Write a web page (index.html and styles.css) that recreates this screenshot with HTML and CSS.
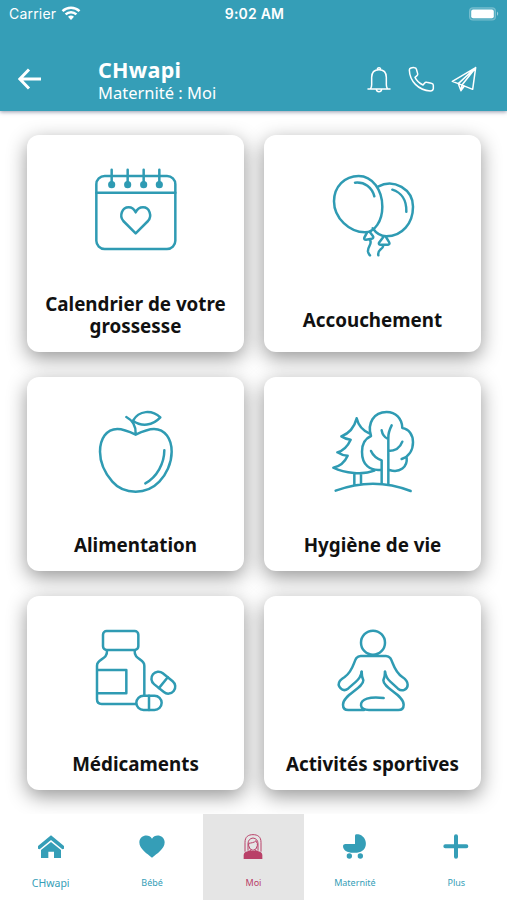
FILE: index.html
```html
<!DOCTYPE html>
<html lang="fr">

<head>
    <meta charset="UTF-8">
    <meta name="viewport" content="width=device-width, initial-scale=1.0">
    <title>CHwapi - Maternité</title>
    <link rel="stylesheet" href="styles.css">
</head>

<body>
    <header class="header">
        <!-- Status bar -->
        <div class="status">
            <div class="carrier">
                <span>Carrier</span>
                <svg width="20" height="15" viewBox="0 0 20 15" fill="none" stroke="#fff" stroke-width="2.5">
                    <path d="M1.5 5.1C6.4.6 13.6.6 18.5 5.1M4.6 8.3C7.7 5.4 12.3 5.4 15.4 8.3" />
                    <path d="M7 10.8Q10 8.3 13 10.8L10 13.9Z" fill="#fff" stroke="none" />
                </svg>
            </div>
            <span class="time">9:02 AM</span>
            <svg class="battery" width="32" height="16" viewBox="0 0 32 16">
                <rect x="1" y="1.2" width="27" height="13.4" rx="4" fill="#76bdce" />
                <rect x="2.2" y="2.4" width="24.6" height="11" rx="3" fill="#4fabc1" />
                <rect x="3.2" y="3.6" width="22.6" height="8.6" rx="2" fill="#fff" />
                <path d="M29 5.6Q31.4 7.8 29 10Z" fill="#9bcfdb" />
            </svg>
        </div>
        <!-- Title bar -->
        <div class="toolbar">
            <svg class="back" width="24" height="22" viewBox="0 0 24 22" fill="none" stroke="#fff" stroke-width="3">
                <path d="M11 1.500 1.800 11 11 20.500M2 11H23" />
            </svg>
            <div class="heading">
                <h1>CHwapi</h1>
                <p>Maternité : Moi</p>
            </div>
            <div class="actions">
                <svg width="26" height="28" viewBox="0 0 78 84">
                    <path d="M6 72H72M13 72Q17 67 17 59V37C17 22 26 14 39 14S61 22 61 37V59Q61 67 65 72M31 73Q32 80 39 80T47 73M34 14Q34 8 39 8T44 14" />
                </svg>
                <svg width="28" height="28" viewBox="0 0 84 84">
                    <path d="M7 15C7 9 14 7 23 8Q27 8 28 12L32 26Q33 30 30 32L24 37C29 47 38 55 48 60L53 54Q55 51 59 52L73 55Q79 56 79 61V71Q78 78 70 78C34 76 8 48 7 15Z" />
                </svg>
                <svg width="28" height="28" viewBox="0 0 84 84">
                    <path d="M77 8 7 49 25 56 68 73ZM77 8 25 56 33 77 43 63M33 77 36 60 77 8" />
                </svg>
            </div>
        </div>
    </header>

    <main class="grid">
        <a class="card">
            <svg class="icon" viewBox="222 129 252 252">
                <rect x="229" y="153" width="237" height="219" rx="25" />
                <path d="M229 203H466M275 134V178M323 134V178M371 134V178M418 134V178M347 325 310 288C297 273 306 247 326 247Q340 247 347 262Q354 247 369 247C389 247 397 273 384 288Z" />
                <g class="dots">
                    <circle cx="275" cy="179" r="7" />
                    <circle cx="323" cy="179" r="7" />
                    <circle cx="371" cy="179" r="7" />
                    <circle cx="418" cy="179" r="7" />
                </g>
            </svg>
            <h2>Calendrier de votre grossesse</h2>
        </a>
        <a class="card">
            <svg class="icon" viewBox="219 144 252 252">
                <path d="M302 150C343 150 373 192 373 242C373 285 350 319 321 319C275 319 228 277 228 226C228 182 260 150 302 150ZM360 182C408 155 465 191 465 242C465 291 433 331 385 331Q361 331 344 307" />
                <path d="M291 170C320 167 342 184 349 211M403 191C429 199 446 222 445 257" />
                <path d="M327 320 319 335Q317 341 324 341L341 338Q349 336 344 329L336 319M376 333 363 350Q361 356 368 356H390Q397 355 393 348L384 333" />
                <path d="M336 342C344 354 328 361 330 377Q331 383 336 388M376 358Q375 366 367 371Q359 378 361 388" />
            </svg>
            <h2>Accouchement</h2>
        </a>
        <a class="card">
            <svg class="icon" viewBox="222 117 252 252">
                <path d="M347 191C316 176 305 174 292 174C259 174 240 204 240 242C240 277 259 311 277 332C295 353 321 362 347 362S398 353 418 332C438 311 455 277 455 242C455 204 435 174 402 174C389 174 374 178 347 191ZM347 189Q349 154 319 138M339 149C357 117 396 116 421 139C398 164 365 168 339 149M433 238C433 277 411 318 376 337" />
            </svg>
            <h2>Alimentation</h2>
        </a>
        <a class="card">
            <svg class="icon" viewBox="219 117 252 252">
                <path d="M334 187C312 178 300 159 296 142C289 169 274 187 250 196Q264 205 278 206C269 226 255 239 238 244Q253 254 269 254C260 274 244 286 226 290C260 307 316 312 349 299M289 307V340M309 307V340M233 359C306 332 386 332 458 360" />
                <path d="M371 296C335 301 312 281 312 242C312 221 321 203 339 195C327 157 347 123 386 123C413 123 432 142 433 171C453 174 465 191 465 214C465 237 453 257 431 264M446 260C449 288 426 307 394 297M371 338V268Q348 260 339 240M391 338V202Q390 184 401 163M371 178Q374 196 390 204M391 240Q423 240 433 212" />
            </svg>
            <h2>Hygiène de vie</h2>
        </a>
        <a class="card">
            <svg class="icon" viewBox="222 129 252 252">
                <rect x="249" y="135" width="106" height="57" rx="11" />
                <path d="M261 193C263 224 231 216 231 239V340Q231 354 245 354H348M344 193C342 224 373 216 373 239V328M231 252H319V322H231" />
                <rect x="349" y="329" width="76" height="43" rx="21.500" />
                <path d="M387 329V372" />
                <g transform="rotate(39 430 290)">
                    <rect x="390" y="269" width="80" height="42" rx="21" />
                    <path d="M430 269V311" />
                </g>
            </svg>
            <h2>Médicaments</h2>
        </a>
        <a class="card">
            <svg class="icon" viewBox="219 129 252 252">
                <circle cx="345" cy="170" r="36" />
                <path d="M311 257Q311 272 316 283C316 308 255 326 255 356Q255 372 271 372H318M381 257Q381 272 376 283C376 308 437 326 437 356Q437 372 421 372H333C302 372 302 347 327 338Q345 332 377 336" />
                <path d="M311 257Q308 275 294 287L270 308C253 321 235 299 246 284Q249 280 260 273C294 249 284 210 308 210H384C408 210 398 249 433 273C445 281 449 286 449 296C449 311 432 318 420 308L397 287Q384 276 381 257" />
            </svg>
            <h2>Activités sportives</h2>
        </a>
    </main>

    <!-- Bottom tabs -->
    <nav class="tabs">
        <a class="tab tab-large">
            <svg viewBox="0 0 84 84">
                <path d="M42 7 81 39V47L76 49 42 21 8 49 3 47V39ZM42 27 72 51V75H51V56H34V75H12V51Z" />
            </svg>
            <span>CHwapi</span>
        </a>
        <a class="tab">
            <svg viewBox="0 0 84 84">
                <path d="M42 74C28 63 4 48 4 28C4 6 33 0 42 17C51 0 80 6 80 28C80 48 56 63 42 74Z" />
            </svg>
            <span>Bébé</span>
        </a>
        <a class="tab active">
            <svg viewBox="0 0 84 84">
                <path d="M14 78V66Q15 57 26 55L35 51Q42 57 49 51L58 55Q69 57 70 66V78Z" />
                <path class="line" d="M18 56V28C18 11 28 5 42 5S66 11 66 28V56M27 53V31Q28 17 42 15Q56 17 57 31V53M29 31C35 30 47 29 51 23Q52 30 55 31V38Q53 51 42 52Q31 51 29 38Z" />
            </svg>
            <span>Moi</span>
        </a>
        <a class="tab">
            <svg viewBox="0 0 84 84">
                <path d="M46 4H52C82 10 84 57 48 59H37C18 59 6 52 6 38Q7 33 13 33H42V8Q43 4 46 4Z" />
                <circle cx="25" cy="69" r="8" />
                <circle cx="58" cy="69" r="8" />
            </svg>
            <span>Maternité</span>
        </a>
        <a class="tab">
            <svg viewBox="0 0 84 84">
                <path class="plus" d="M42 10V71M10 40H73" />
            </svg>
            <span>Plus</span>
        </a>
    </nav>
</body>

</html>
```
FILE: styles.css
```css
* {
    box-sizing: border-box;
}

body {
    margin: 0;
    height: 900px;
    display: flex;
    flex-direction: column;
    overflow: hidden;
    background: #fff;
    color: #111;
    font-family: "Noto Sans", sans-serif;
}

h1,
h2,
p {
    margin: 0;
}

.header {
    height: 111px;
    flex: none;
    background: #359eb7;
    color: #fff;
    box-shadow: 0 1px 4px rgba(40, 50, 90, 0.5);
    z-index: 1;
}

.status {
    display: grid;
    grid-template-columns: 1fr auto 1fr;
    align-items: center;
    height: 27px;
    padding: 0 7px 0 9px;
    font-family: Inter, sans-serif;
    font-size: 14px;
}

.carrier {
    display: flex;
    align-items: center;
    gap: 5px;
    letter-spacing: 0.2px;
}

.time {
    font-weight: 600;
    letter-spacing: 0.2px;
}

.battery {
    justify-self: end;
}

.toolbar {
    display: flex;
    align-items: center;
    height: 84px;
    padding: 0 29px 0 18px;
}

.back {
    margin-top: 19px;
}

.heading {
    margin: 24px 0 0 56px;
}

.heading h1 {
    font-size: 21.5px;
    line-height: 23px;
    letter-spacing: 0.3px;
}

.heading p {
    font-size: 16.5px;
    line-height: 23px;
}

.actions {
    display: flex;
    gap: 15px;
    margin: 19px 0 0 auto;
}

.actions svg {
    fill: none;
    stroke: #fff;
    stroke-width: 4.5;
    stroke-linejoin: round;
    stroke-linecap: round;
}

.grid {
    flex: 1;
    display: grid;
    grid-template-columns: 217px 217px;
    grid-template-rows: 217px 194px 194px;
    gap: 25px 20px;
    padding: 24px 27px 0;
}

.card {
    display: flex;
    flex-direction: column;
    align-items: center;
    justify-content: space-around;
    padding: 33px 12px 15px;
    background: #fff;
    border-radius: 12px;
    box-shadow: 0 6px 20px rgba(0, 0, 0, 0.42);
}

.icon {
    width: 84px;
    height: 84px;
    flex: none;
    fill: none;
    stroke: #2f9bb3;
    stroke-width: 7.5;
    stroke-linecap: round;
    stroke-linejoin: round;
}

.dots {
    fill: #2f9bb3;
}

.card h2 {
    padding-top: 40px;
    font-size: 18.8px;
    line-height: 22px;
    text-align: center;
}

.tabs {
    display: grid;
    grid-template-columns: repeat(5, 1fr);
    height: 86px;
    flex: none;
    background: #fff;
    z-index: 1;
}

.tab {
    display: flex;
    flex-direction: column;
    align-items: center;
    padding-top: 19px;
    color: #359eb7;
    font-size: 9px;
    line-height: 14px;
}

.tab svg {
    width: 28px;
    height: 28px;
    margin-bottom: 15px;
    fill: currentColor;
}

.tab-large {
    font-size: 10.5px;
}

.tab.active {
    background: #e5e5e5;
    color: #b94068;
}

.tab .line {
    fill: none;
    stroke: currentColor;
    stroke-width: 3;
}

.tab .plus {
    stroke: currentColor;
    stroke-width: 12;
    stroke-linecap: round;
}
```
